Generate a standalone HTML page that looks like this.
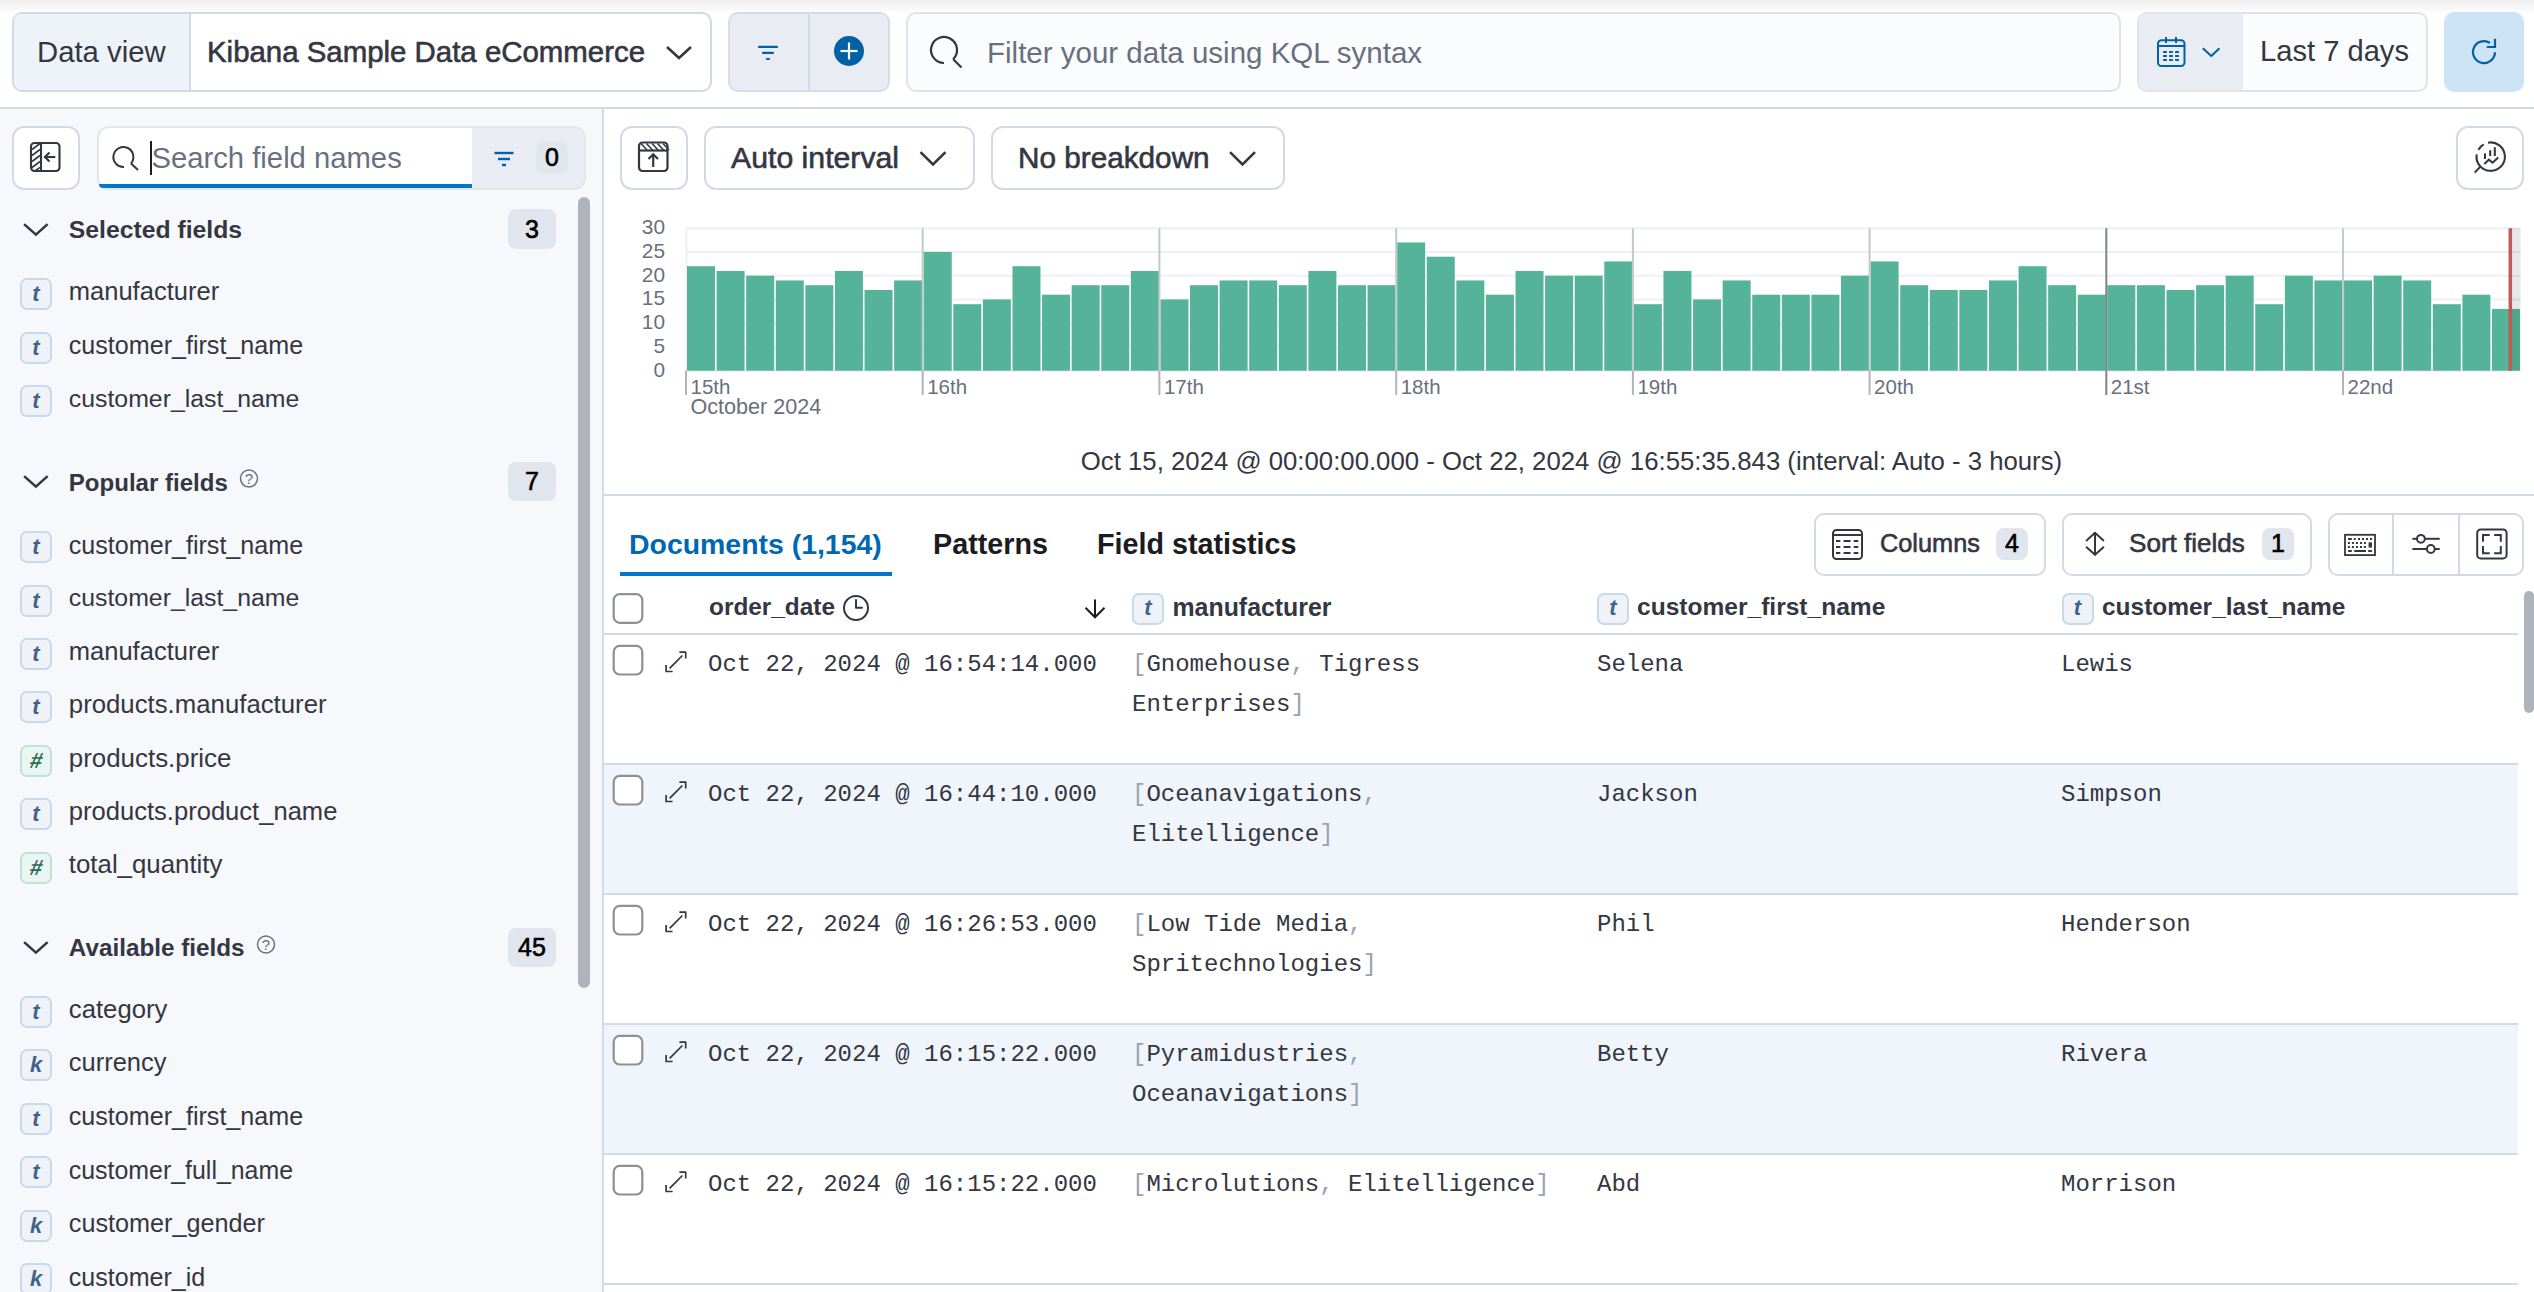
<!DOCTYPE html>
<html><head><meta charset="utf-8"><title>Discover</title><style>*{margin:0;padding:0;box-sizing:border-box}
html,body{width:2534px;height:1292px;overflow:hidden}
body{position:relative;background:#fff;font-family:"Liberation Sans",sans-serif;color:#343741}
.a{position:absolute}
.t{position:absolute;white-space:pre;line-height:1}
svg{position:absolute;left:0;top:0}
</style></head>
<body>
<div class="a" style="left:0px;top:0px;width:2534px;height:14px;background:linear-gradient(to bottom, rgba(0,0,0,0.07), rgba(0,0,0,0));z-index:1"></div>
<div class="a" style="left:0px;top:107px;width:2534px;height:2px;background:#d3dae6;"></div>
<div class="a" style="left:12px;top:12px;width:700px;height:80px;background:#fff;border:2px solid #d3dae6;border-radius:10px;"></div>
<div class="a" style="left:14px;top:14px;width:175px;height:76px;background:#eef2f9;border-radius:8px 0 0 8px;"></div>
<div class="a" style="left:189px;top:14px;width:2px;height:76px;background:#d3dae6;"></div>
<div class="t" style="left:37.0px;top:36.9px;font-size:29.29px;color:#343741;font-weight:400;font-family:'Liberation Sans', sans-serif;">Data view</div>
<div class="t" style="left:207.0px;top:36.8px;font-size:29.42px;color:#343741;font-weight:400;font-family:'Liberation Sans', sans-serif;-webkit-text-stroke-width:0.6px;">Kibana Sample Data eCommerce</div>
<div class="a" style="left:728px;top:12px;width:162px;height:80px;background:#e9edf3;border:2px solid #d6dcea;border-radius:10px;"></div>
<div class="a" style="left:808px;top:14px;width:2px;height:76px;background:#d3dae6;"></div>
<div class="a" style="left:906px;top:12px;width:1215px;height:80px;background:#fbfcfd;border:2px solid #e0e3e9;border-radius:10px;"></div>
<div class="t" style="left:987.0px;top:37.7px;font-size:29.5px;color:#69707d;font-weight:400;font-family:'Liberation Sans', sans-serif;">Filter your data using KQL syntax</div>
<div class="a" style="left:2137px;top:12px;width:291px;height:80px;background:#fbfcfd;border:2px solid #e0e3e9;border-radius:10px;"></div>
<div class="a" style="left:2139px;top:14px;width:104px;height:76px;background:#e9edf3;border-radius:8px 0 0 8px;"></div>
<div class="t" style="left:2260.0px;top:37.0px;font-size:29.13px;color:#343741;font-weight:400;font-family:'Liberation Sans', sans-serif;">Last 7 days</div>
<div class="a" style="left:2444px;top:12px;width:80px;height:80px;background:#cce4f5;border-radius:10px;"></div>
<div class="a" style="left:0px;top:109px;width:602px;height:1183px;background:#f7f8fc;"></div>
<div class="a" style="left:602px;top:109px;width:2px;height:1183px;background:#d3dae6;"></div>
<div class="a" style="left:12px;top:126px;width:68px;height:64px;background:#fff;border:2px solid #d3dae6;border-radius:12px;"></div>
<div class="a" style="left:97px;top:126px;width:489px;height:64px;background:#e9edf3;border:2px solid #e3e6eb;border-radius:12px;"></div>
<div class="a" style="left:99px;top:128px;width:373px;height:60px;background:#fff;border-radius:10px 0 0 10px;"></div>
<div class="a" style="left:99px;top:184px;width:373px;height:4px;background:#0077cc;border-radius:0 0 0 10px;"></div>
<div class="a" style="left:150px;top:141px;width:2px;height:34px;background:#1a1c21;"></div>
<div class="t" style="left:151.5px;top:144.0px;font-size:29.24px;color:#69707d;font-weight:400;font-family:'Liberation Sans', sans-serif;">Search field names</div>
<div class="a" style="left:536px;top:142px;width:32px;height:31px;background:#e0e5ee;border-radius:8px;"></div>
<div class="t" style="left:-448.0px;width:2000px;text-align:center;top:145.3px;font-size:25px;color:#000;font-weight:400;font-family:'Liberation Sans', sans-serif;-webkit-text-stroke-width:0.6px;">0</div>
<div class="a" style="left:578px;top:197px;width:12px;height:791px;background:#afb3bc;border-radius:6px;"></div>
<div class="t" style="left:68.8px;top:217.8px;font-size:24.75px;color:#343741;font-weight:700;font-family:'Liberation Sans', sans-serif;">Selected fields</div>
<div class="a" style="left:508px;top:209.4px;width:48px;height:39.5px;background:#e0e5ee;border-radius:8px;"></div>
<div class="t" style="left:-468.0px;width:2000px;text-align:center;top:216.6px;font-size:25px;color:#000;font-weight:400;font-family:'Liberation Sans', sans-serif;-webkit-text-stroke-width:0.6px;">3</div>
<div class="a" style="left:20px;top:278.29999999999995px;width:32px;height:32.0px;background:#eff3f8;border:2px solid #c8d9ea;border-radius:7px;"></div>
<div class="t" style="left:-964.0px;width:2000px;text-align:center;top:283.2px;font-size:22px;color:#40638c;font-weight:700;font-family:'Liberation Sans', sans-serif;font-style:italic;">t</div>
<div class="t" style="left:68.8px;top:279.3px;font-size:25.53px;color:#343741;font-weight:400;font-family:'Liberation Sans', sans-serif;">manufacturer</div>
<div class="a" style="left:20px;top:331.84999999999997px;width:32px;height:32.0px;background:#eff3f8;border:2px solid #c8d9ea;border-radius:7px;"></div>
<div class="t" style="left:-964.0px;width:2000px;text-align:center;top:336.7px;font-size:22px;color:#40638c;font-weight:700;font-family:'Liberation Sans', sans-serif;font-style:italic;">t</div>
<div class="t" style="left:68.8px;top:333.2px;font-size:25.1px;color:#343741;font-weight:400;font-family:'Liberation Sans', sans-serif;">customer_first_name</div>
<div class="a" style="left:20px;top:385.4px;width:32px;height:32.0px;background:#eff3f8;border:2px solid #c8d9ea;border-radius:7px;"></div>
<div class="t" style="left:-964.0px;width:2000px;text-align:center;top:390.3px;font-size:22px;color:#40638c;font-weight:700;font-family:'Liberation Sans', sans-serif;font-style:italic;">t</div>
<div class="t" style="left:68.8px;top:387.0px;font-size:24.84px;color:#343741;font-weight:400;font-family:'Liberation Sans', sans-serif;">customer_last_name</div>
<div class="t" style="left:68.8px;top:470.5px;font-size:24.06px;color:#343741;font-weight:700;font-family:'Liberation Sans', sans-serif;">Popular fields</div>
<div class="a" style="left:508px;top:461.5px;width:48px;height:39.5px;background:#e0e5ee;border-radius:8px;"></div>
<div class="t" style="left:-468.0px;width:2000px;text-align:center;top:468.7px;font-size:25px;color:#000;font-weight:400;font-family:'Liberation Sans', sans-serif;-webkit-text-stroke-width:0.6px;">7</div>
<div class="t" style="left:-751.0px;width:2000px;text-align:center;top:471.4px;font-size:15px;color:#69707d;font-weight:400;font-family:'Liberation Sans', sans-serif;">?</div>
<div class="a" style="left:20px;top:531.1999999999999px;width:32px;height:32.0px;background:#eff3f8;border:2px solid #c8d9ea;border-radius:7px;"></div>
<div class="t" style="left:-964.0px;width:2000px;text-align:center;top:536.1px;font-size:22px;color:#40638c;font-weight:700;font-family:'Liberation Sans', sans-serif;font-style:italic;">t</div>
<div class="t" style="left:68.8px;top:532.6px;font-size:25.1px;color:#343741;font-weight:400;font-family:'Liberation Sans', sans-serif;">customer_first_name</div>
<div class="a" style="left:20px;top:584.5999999999999px;width:32px;height:32.0px;background:#eff3f8;border:2px solid #c8d9ea;border-radius:7px;"></div>
<div class="t" style="left:-964.0px;width:2000px;text-align:center;top:589.5px;font-size:22px;color:#40638c;font-weight:700;font-family:'Liberation Sans', sans-serif;font-style:italic;">t</div>
<div class="t" style="left:68.8px;top:586.2px;font-size:24.84px;color:#343741;font-weight:400;font-family:'Liberation Sans', sans-serif;">customer_last_name</div>
<div class="a" style="left:20px;top:637.9999999999999px;width:32px;height:32.0px;background:#eff3f8;border:2px solid #c8d9ea;border-radius:7px;"></div>
<div class="t" style="left:-964.0px;width:2000px;text-align:center;top:642.9px;font-size:22px;color:#40638c;font-weight:700;font-family:'Liberation Sans', sans-serif;font-style:italic;">t</div>
<div class="t" style="left:68.8px;top:639.0px;font-size:25.53px;color:#343741;font-weight:400;font-family:'Liberation Sans', sans-serif;">manufacturer</div>
<div class="a" style="left:20px;top:691.4px;width:32px;height:32.0px;background:#eff3f8;border:2px solid #c8d9ea;border-radius:7px;"></div>
<div class="t" style="left:-964.0px;width:2000px;text-align:center;top:696.3px;font-size:22px;color:#40638c;font-weight:700;font-family:'Liberation Sans', sans-serif;font-style:italic;">t</div>
<div class="t" style="left:68.8px;top:692.2px;font-size:25.77px;color:#343741;font-weight:400;font-family:'Liberation Sans', sans-serif;">products.manufacturer</div>
<div class="a" style="left:20px;top:744.8px;width:32px;height:32.0px;background:#eaf6f1;border:2px solid #bfe2d4;border-radius:7px;"></div>
<div class="t" style="left:-964.0px;width:2000px;text-align:center;top:749.7px;font-size:22px;color:#2f6b59;font-weight:700;font-family:'Liberation Sans', sans-serif;font-style:italic;transform:skewX(-12deg);">#</div>
<div class="t" style="left:68.8px;top:745.5px;font-size:25.9px;color:#343741;font-weight:400;font-family:'Liberation Sans', sans-serif;">products.price</div>
<div class="a" style="left:20px;top:798.1999999999999px;width:32px;height:32.0px;background:#eff3f8;border:2px solid #c8d9ea;border-radius:7px;"></div>
<div class="t" style="left:-964.0px;width:2000px;text-align:center;top:803.1px;font-size:22px;color:#40638c;font-weight:700;font-family:'Liberation Sans', sans-serif;font-style:italic;">t</div>
<div class="t" style="left:68.8px;top:799.2px;font-size:25.57px;color:#343741;font-weight:400;font-family:'Liberation Sans', sans-serif;">products.product_name</div>
<div class="a" style="left:20px;top:851.5999999999999px;width:32px;height:32.0px;background:#eaf6f1;border:2px solid #bfe2d4;border-radius:7px;"></div>
<div class="t" style="left:-964.0px;width:2000px;text-align:center;top:856.5px;font-size:22px;color:#2f6b59;font-weight:700;font-family:'Liberation Sans', sans-serif;font-style:italic;transform:skewX(-12deg);">#</div>
<div class="t" style="left:68.8px;top:852.3px;font-size:25.84px;color:#343741;font-weight:400;font-family:'Liberation Sans', sans-serif;">total_quantity</div>
<div class="t" style="left:68.8px;top:936.3px;font-size:24.28px;color:#343741;font-weight:700;font-family:'Liberation Sans', sans-serif;">Available fields</div>
<div class="a" style="left:508px;top:927.5px;width:48px;height:39.5px;background:#e0e5ee;border-radius:8px;"></div>
<div class="t" style="left:-468.0px;width:2000px;text-align:center;top:934.7px;font-size:25px;color:#000;font-weight:400;font-family:'Liberation Sans', sans-serif;-webkit-text-stroke-width:0.6px;">45</div>
<div class="t" style="left:-734.0px;width:2000px;text-align:center;top:937.3px;font-size:15px;color:#69707d;font-weight:400;font-family:'Liberation Sans', sans-serif;">?</div>
<div class="a" style="left:20px;top:995.6999999999999px;width:32px;height:31.999999999999886px;background:#eff3f8;border:2px solid #c8d9ea;border-radius:7px;"></div>
<div class="t" style="left:-964.0px;width:2000px;text-align:center;top:1000.6px;font-size:22px;color:#40638c;font-weight:700;font-family:'Liberation Sans', sans-serif;font-style:italic;">t</div>
<div class="t" style="left:68.8px;top:996.5px;font-size:25.71px;color:#343741;font-weight:400;font-family:'Liberation Sans', sans-serif;">category</div>
<div class="a" style="left:20px;top:1049.2px;width:32px;height:32.0px;background:#eff3f8;border:2px solid #c8d9ea;border-radius:7px;"></div>
<div class="t" style="left:-964.0px;width:2000px;text-align:center;top:1054.1px;font-size:22px;color:#40638c;font-weight:700;font-family:'Liberation Sans', sans-serif;font-style:italic;">k</div>
<div class="t" style="left:68.8px;top:1050.2px;font-size:25.48px;color:#343741;font-weight:400;font-family:'Liberation Sans', sans-serif;">currency</div>
<div class="a" style="left:20px;top:1102.7px;width:32px;height:32.0px;background:#eff3f8;border:2px solid #c8d9ea;border-radius:7px;"></div>
<div class="t" style="left:-964.0px;width:2000px;text-align:center;top:1107.6px;font-size:22px;color:#40638c;font-weight:700;font-family:'Liberation Sans', sans-serif;font-style:italic;">t</div>
<div class="t" style="left:68.8px;top:1104.1px;font-size:25.1px;color:#343741;font-weight:400;font-family:'Liberation Sans', sans-serif;">customer_first_name</div>
<div class="a" style="left:20px;top:1156.2px;width:32px;height:32.0px;background:#eff3f8;border:2px solid #c8d9ea;border-radius:7px;"></div>
<div class="t" style="left:-964.0px;width:2000px;text-align:center;top:1161.1px;font-size:22px;color:#40638c;font-weight:700;font-family:'Liberation Sans', sans-serif;font-style:italic;">t</div>
<div class="t" style="left:68.8px;top:1157.7px;font-size:24.92px;color:#343741;font-weight:400;font-family:'Liberation Sans', sans-serif;">customer_full_name</div>
<div class="a" style="left:20px;top:1209.7px;width:32px;height:32.0px;background:#eff3f8;border:2px solid #c8d9ea;border-radius:7px;"></div>
<div class="t" style="left:-964.0px;width:2000px;text-align:center;top:1214.6px;font-size:22px;color:#40638c;font-weight:700;font-family:'Liberation Sans', sans-serif;font-style:italic;">k</div>
<div class="t" style="left:68.8px;top:1211.0px;font-size:25.21px;color:#343741;font-weight:400;font-family:'Liberation Sans', sans-serif;">customer_gender</div>
<div class="a" style="left:20px;top:1263.2px;width:32px;height:32.0px;background:#eff3f8;border:2px solid #c8d9ea;border-radius:7px;"></div>
<div class="t" style="left:-964.0px;width:2000px;text-align:center;top:1268.1px;font-size:22px;color:#40638c;font-weight:700;font-family:'Liberation Sans', sans-serif;font-style:italic;">k</div>
<div class="t" style="left:68.8px;top:1264.6px;font-size:25.06px;color:#343741;font-weight:400;font-family:'Liberation Sans', sans-serif;">customer_id</div>
<div class="a" style="left:620px;top:126px;width:68px;height:64px;background:#fff;border:2px solid #d3dae6;border-radius:12px;"></div>
<div class="a" style="left:704px;top:126px;width:271px;height:64px;background:#fff;border:2px solid #d3dae6;border-radius:12px;"></div>
<div class="t" style="left:731.0px;top:142.8px;font-size:30.24px;color:#343741;font-weight:400;font-family:'Liberation Sans', sans-serif;-webkit-text-stroke-width:0.6px;">Auto interval</div>
<div class="a" style="left:991px;top:126px;width:294px;height:64px;background:#fff;border:2px solid #d3dae6;border-radius:12px;"></div>
<div class="t" style="left:1018.0px;top:143.2px;font-size:29.73px;color:#343741;font-weight:400;font-family:'Liberation Sans', sans-serif;-webkit-text-stroke-width:0.6px;">No breakdown</div>
<div class="a" style="left:2456px;top:126px;width:68px;height:64px;background:#fff;border:2px solid #d3dae6;border-radius:12px;"></div>
<div class="t" style="right:1869.0px;top:359.7px;font-size:20.8px;color:#69707d;font-weight:400;font-family:'Liberation Sans', sans-serif;">0</div>
<div class="t" style="right:1869.0px;top:335.9px;font-size:20.8px;color:#69707d;font-weight:400;font-family:'Liberation Sans', sans-serif;">5</div>
<div class="t" style="right:1869.0px;top:312.2px;font-size:20.8px;color:#69707d;font-weight:400;font-family:'Liberation Sans', sans-serif;">10</div>
<div class="t" style="right:1869.0px;top:288.4px;font-size:20.8px;color:#69707d;font-weight:400;font-family:'Liberation Sans', sans-serif;">15</div>
<div class="t" style="right:1869.0px;top:264.7px;font-size:20.8px;color:#69707d;font-weight:400;font-family:'Liberation Sans', sans-serif;">20</div>
<div class="t" style="right:1869.0px;top:240.9px;font-size:20.8px;color:#69707d;font-weight:400;font-family:'Liberation Sans', sans-serif;">25</div>
<div class="t" style="right:1869.0px;top:217.2px;font-size:20.8px;color:#69707d;font-weight:400;font-family:'Liberation Sans', sans-serif;">30</div>
<div class="t" style="left:690.5px;top:377.2px;font-size:20.5px;color:#69707d;font-weight:400;font-family:'Liberation Sans', sans-serif;">15th</div>
<div class="t" style="left:927.2px;top:377.2px;font-size:20.5px;color:#69707d;font-weight:400;font-family:'Liberation Sans', sans-serif;">16th</div>
<div class="t" style="left:1163.9px;top:377.2px;font-size:20.5px;color:#69707d;font-weight:400;font-family:'Liberation Sans', sans-serif;">17th</div>
<div class="t" style="left:1400.7px;top:377.2px;font-size:20.5px;color:#69707d;font-weight:400;font-family:'Liberation Sans', sans-serif;">18th</div>
<div class="t" style="left:1637.4px;top:377.2px;font-size:20.5px;color:#69707d;font-weight:400;font-family:'Liberation Sans', sans-serif;">19th</div>
<div class="t" style="left:1874.1px;top:377.2px;font-size:20.5px;color:#69707d;font-weight:400;font-family:'Liberation Sans', sans-serif;">20th</div>
<div class="t" style="left:2110.8px;top:377.2px;font-size:20.5px;color:#69707d;font-weight:400;font-family:'Liberation Sans', sans-serif;">21st</div>
<div class="t" style="left:2347.5px;top:377.2px;font-size:20.5px;color:#69707d;font-weight:400;font-family:'Liberation Sans', sans-serif;">22nd</div>
<div class="t" style="left:690.5px;top:396.0px;font-size:21.6px;color:#69707d;font-weight:400;font-family:'Liberation Sans', sans-serif;">October 2024</div>
<div class="t" style="left:571.5px;width:2000px;text-align:center;top:449.2px;font-size:25.75px;color:#343741;font-weight:400;font-family:'Liberation Sans', sans-serif;">Oct 15, 2024 @ 00:00:00.000 - Oct 22, 2024 @ 16:55:35.843 (interval: Auto - 3 hours)</div>
<div class="a" style="left:604px;top:494px;width:1930px;height:2px;background:#d3dae6;"></div>
<div class="t" style="left:629.0px;top:530.4px;font-size:28.43px;color:#0067b5;font-weight:700;font-family:'Liberation Sans', sans-serif;">Documents (1,154)</div>
<div class="t" style="left:933.0px;top:530.2px;font-size:28.74px;color:#1a1c21;font-weight:700;font-family:'Liberation Sans', sans-serif;">Patterns</div>
<div class="t" style="left:1097.0px;top:530.2px;font-size:28.72px;color:#1a1c21;font-weight:700;font-family:'Liberation Sans', sans-serif;">Field statistics</div>
<div class="a" style="left:620px;top:572px;width:272px;height:4px;background:#0077cc;"></div>
<div class="a" style="left:1814px;top:513px;width:232px;height:63px;background:#fff;border:2px solid #d3dae6;border-radius:10px;"></div>
<div class="t" style="left:1880.0px;top:530.9px;font-size:25.32px;color:#343741;font-weight:400;font-family:'Liberation Sans', sans-serif;-webkit-text-stroke-width:0.6px;">Columns</div>
<div class="a" style="left:1996px;top:528px;width:32px;height:32px;background:#e0e5ee;border-radius:8px;"></div>
<div class="t" style="left:1012.0px;width:2000px;text-align:center;top:531.4px;font-size:25px;color:#000;font-weight:400;font-family:'Liberation Sans', sans-serif;-webkit-text-stroke-width:0.6px;">4</div>
<div class="a" style="left:2062px;top:513px;width:250px;height:63px;background:#fff;border:2px solid #d3dae6;border-radius:10px;"></div>
<div class="t" style="left:2129.0px;top:530.2px;font-size:26.07px;color:#343741;font-weight:400;font-family:'Liberation Sans', sans-serif;-webkit-text-stroke-width:0.6px;">Sort fields</div>
<div class="a" style="left:2262px;top:528px;width:32px;height:32px;background:#e0e5ee;border-radius:8px;"></div>
<div class="t" style="left:1278.0px;width:2000px;text-align:center;top:531.4px;font-size:25px;color:#000;font-weight:400;font-family:'Liberation Sans', sans-serif;-webkit-text-stroke-width:0.6px;">1</div>
<div class="a" style="left:2328px;top:513px;width:196px;height:63px;background:#fff;border:2px solid #d3dae6;border-radius:10px;"></div>
<div class="a" style="left:2392px;top:515px;width:2px;height:59px;background:#d3dae6;"></div>
<div class="a" style="left:2458px;top:515px;width:2px;height:59px;background:#d3dae6;"></div>
<div class="t" style="left:709.0px;top:595.2px;font-size:24.38px;color:#343741;font-weight:700;font-family:'Liberation Sans', sans-serif;">order_date</div>
<div class="a" style="left:1132px;top:592.5px;width:32px;height:32.0px;background:#eff3f8;border:2px solid #c8d9ea;border-radius:7px;"></div>
<div class="t" style="left:148.0px;width:2000px;text-align:center;top:597.4px;font-size:22px;color:#40638c;font-weight:700;font-family:'Liberation Sans', sans-serif;font-style:italic;">t</div>
<div class="t" style="left:1172.5px;top:594.7px;font-size:24.88px;color:#343741;font-weight:700;font-family:'Liberation Sans', sans-serif;">manufacturer</div>
<div class="a" style="left:1597px;top:592.5px;width:32px;height:32.0px;background:#eff3f8;border:2px solid #c8d9ea;border-radius:7px;"></div>
<div class="t" style="left:613.0px;width:2000px;text-align:center;top:597.4px;font-size:22px;color:#40638c;font-weight:700;font-family:'Liberation Sans', sans-serif;font-style:italic;">t</div>
<div class="t" style="left:1637.0px;top:595.0px;font-size:24.55px;color:#343741;font-weight:700;font-family:'Liberation Sans', sans-serif;">customer_first_name</div>
<div class="a" style="left:2061.5px;top:592.5px;width:32.0px;height:32.0px;background:#eff3f8;border:2px solid #c8d9ea;border-radius:7px;"></div>
<div class="t" style="left:1077.5px;width:2000px;text-align:center;top:597.4px;font-size:22px;color:#40638c;font-weight:700;font-family:'Liberation Sans', sans-serif;font-style:italic;">t</div>
<div class="t" style="left:2102.0px;top:595.1px;font-size:24.47px;color:#343741;font-weight:700;font-family:'Liberation Sans', sans-serif;">customer_last_name</div>
<div class="a" style="left:604px;top:633px;width:1914px;height:2px;background:#d3dae6;"></div>
<div class="a" style="left:604px;top:763px;width:1914px;height:2px;background:#d3dae6;"></div>
<div class="t" style="left:708.0px;top:652.6px;font-size:24px;color:#343741;font-weight:400;font-family:'Liberation Mono', monospace;">Oct 22, 2024 @ 16:54:14.000</div>
<div class="t" style="left:1132.0px;top:652.6px;font-size:24px;color:#343741;font-weight:400;font-family:'Liberation Mono', monospace;"><span style="color:#98a2b3">[</span><span style="color:#343741">Gnomehouse</span><span style="color:#98a2b3">,</span><span style="color:#343741"> Tigress</span></div>
<div class="t" style="left:1132.0px;top:692.6px;font-size:24px;color:#343741;font-weight:400;font-family:'Liberation Mono', monospace;"><span style="color:#343741">Enterprises</span><span style="color:#98a2b3">]</span></div>
<div class="t" style="left:1597.0px;top:652.6px;font-size:24px;color:#343741;font-weight:400;font-family:'Liberation Mono', monospace;">Selena</div>
<div class="t" style="left:2061.0px;top:652.6px;font-size:24px;color:#343741;font-weight:400;font-family:'Liberation Mono', monospace;">Lewis</div>
<div class="a" style="left:604px;top:765px;width:1914px;height:129px;background:#f0f4fb;"></div>
<div class="a" style="left:604px;top:893px;width:1914px;height:2px;background:#d3dae6;"></div>
<div class="t" style="left:708.0px;top:782.6px;font-size:24px;color:#343741;font-weight:400;font-family:'Liberation Mono', monospace;">Oct 22, 2024 @ 16:44:10.000</div>
<div class="t" style="left:1132.0px;top:782.6px;font-size:24px;color:#343741;font-weight:400;font-family:'Liberation Mono', monospace;"><span style="color:#98a2b3">[</span><span style="color:#343741">Oceanavigations</span><span style="color:#98a2b3">,</span></div>
<div class="t" style="left:1132.0px;top:822.6px;font-size:24px;color:#343741;font-weight:400;font-family:'Liberation Mono', monospace;"><span style="color:#343741">Elitelligence</span><span style="color:#98a2b3">]</span></div>
<div class="t" style="left:1597.0px;top:782.6px;font-size:24px;color:#343741;font-weight:400;font-family:'Liberation Mono', monospace;">Jackson</div>
<div class="t" style="left:2061.0px;top:782.6px;font-size:24px;color:#343741;font-weight:400;font-family:'Liberation Mono', monospace;">Simpson</div>
<div class="a" style="left:604px;top:1023px;width:1914px;height:2px;background:#d3dae6;"></div>
<div class="t" style="left:708.0px;top:912.6px;font-size:24px;color:#343741;font-weight:400;font-family:'Liberation Mono', monospace;">Oct 22, 2024 @ 16:26:53.000</div>
<div class="t" style="left:1132.0px;top:912.6px;font-size:24px;color:#343741;font-weight:400;font-family:'Liberation Mono', monospace;"><span style="color:#98a2b3">[</span><span style="color:#343741">Low Tide Media</span><span style="color:#98a2b3">,</span></div>
<div class="t" style="left:1132.0px;top:952.6px;font-size:24px;color:#343741;font-weight:400;font-family:'Liberation Mono', monospace;"><span style="color:#343741">Spritechnologies</span><span style="color:#98a2b3">]</span></div>
<div class="t" style="left:1597.0px;top:912.6px;font-size:24px;color:#343741;font-weight:400;font-family:'Liberation Mono', monospace;">Phil</div>
<div class="t" style="left:2061.0px;top:912.6px;font-size:24px;color:#343741;font-weight:400;font-family:'Liberation Mono', monospace;">Henderson</div>
<div class="a" style="left:604px;top:1025px;width:1914px;height:129px;background:#f0f4fb;"></div>
<div class="a" style="left:604px;top:1153px;width:1914px;height:2px;background:#d3dae6;"></div>
<div class="t" style="left:708.0px;top:1042.6px;font-size:24px;color:#343741;font-weight:400;font-family:'Liberation Mono', monospace;">Oct 22, 2024 @ 16:15:22.000</div>
<div class="t" style="left:1132.0px;top:1042.6px;font-size:24px;color:#343741;font-weight:400;font-family:'Liberation Mono', monospace;"><span style="color:#98a2b3">[</span><span style="color:#343741">Pyramidustries</span><span style="color:#98a2b3">,</span></div>
<div class="t" style="left:1132.0px;top:1082.6px;font-size:24px;color:#343741;font-weight:400;font-family:'Liberation Mono', monospace;"><span style="color:#343741">Oceanavigations</span><span style="color:#98a2b3">]</span></div>
<div class="t" style="left:1597.0px;top:1042.6px;font-size:24px;color:#343741;font-weight:400;font-family:'Liberation Mono', monospace;">Betty</div>
<div class="t" style="left:2061.0px;top:1042.6px;font-size:24px;color:#343741;font-weight:400;font-family:'Liberation Mono', monospace;">Rivera</div>
<div class="a" style="left:604px;top:1283px;width:1914px;height:2px;background:#d3dae6;"></div>
<div class="t" style="left:708.0px;top:1172.6px;font-size:24px;color:#343741;font-weight:400;font-family:'Liberation Mono', monospace;">Oct 22, 2024 @ 16:15:22.000</div>
<div class="t" style="left:1132.0px;top:1172.6px;font-size:24px;color:#343741;font-weight:400;font-family:'Liberation Mono', monospace;"><span style="color:#98a2b3">[</span><span style="color:#343741">Microlutions</span><span style="color:#98a2b3">,</span><span style="color:#343741"> Elitelligence</span><span style="color:#98a2b3">]</span></div>
<div class="t" style="left:1597.0px;top:1172.6px;font-size:24px;color:#343741;font-weight:400;font-family:'Liberation Mono', monospace;">Abd</div>
<div class="t" style="left:2061.0px;top:1172.6px;font-size:24px;color:#343741;font-weight:400;font-family:'Liberation Mono', monospace;">Morrison</div>
<div class="a" style="left:2524px;top:591px;width:10px;height:122px;background:#afb3bc;border-radius:5px;"></div>
<svg width="2534" height="1292" viewBox="0 0 2534 1292">
<polyline points="667,47 679,58 691,47" fill="none" stroke="#343741" stroke-width="2.6"/>
<g stroke="#0061a6" stroke-width="2.1" stroke-linecap="round"><line x1="759" y1="46.9" x2="777" y2="46.9"/><line x1="763" y1="52.9" x2="773" y2="52.9"/><line x1="767" y1="59" x2="769" y2="59"/></g>
<circle cx="849" cy="51" r="15" fill="#0061a6"/><g stroke="#fff" stroke-width="2.2"><line x1="840.5" y1="51" x2="857.5" y2="51"/><line x1="849" y1="42.5" x2="849" y2="59.5"/></g>
<g fill="none" stroke="#343741" stroke-width="2.2"><path d="M953.2 59.2 A13 13 0 1 0 944 63"/><line x1="953.2" y1="59.2" x2="961.5" y2="67.5"/></g>
<g fill="none" stroke="#0061a6" stroke-width="2"><rect x="2158" y="40.2" width="26.5" height="25.8" rx="3.5"/><line x1="2158" y1="46" x2="2184.5" y2="46"/><line x1="2166" y1="37" x2="2166" y2="43"/><line x1="2176" y1="37" x2="2176" y2="43"/></g>
<rect x="2163.1" y="51" width="3.8" height="2" fill="#0061a6"/>
<rect x="2169.1" y="51" width="3.8" height="2" fill="#0061a6"/>
<rect x="2175.1" y="51" width="3.8" height="2" fill="#0061a6"/>
<rect x="2163.1" y="55" width="3.8" height="2" fill="#0061a6"/>
<rect x="2169.1" y="55" width="3.8" height="2" fill="#0061a6"/>
<rect x="2175.1" y="55" width="3.8" height="2" fill="#0061a6"/>
<rect x="2163.1" y="59" width="3.8" height="2" fill="#0061a6"/>
<rect x="2169.1" y="59" width="3.8" height="2" fill="#0061a6"/>
<rect x="2175.1" y="59" width="3.8" height="2" fill="#0061a6"/>
<polyline points="2202.8,48.2 2211.3,56 2219.5,48.2" fill="none" stroke="#0061a6" stroke-width="2" stroke-linejoin="round"/>
<g fill="none" stroke="#0061a6" stroke-width="2.2"><path d="M2490 42.9 A11 11 0 1 0 2495 52.3"/><polyline points="2495,38.7 2495,47 2486.8,47"/></g>
<g fill="none" stroke="#343741" stroke-width="2.1"><rect x="31" y="143" width="28.5" height="28" rx="3.5"/><line x1="41" y1="143" x2="41" y2="171"/><polyline points="49.5,152.5 44.9,157 49.5,161.5"/><line x1="44.9" y1="157" x2="55.3" y2="157"/></g>
<g stroke="#343741" stroke-width="1.6"><line x1="32" y1="149.5" x2="40" y2="143.5"/><line x1="32" y1="155.5" x2="40" y2="149.5"/><line x1="32" y1="161.5" x2="40" y2="155.5"/><line x1="32" y1="167.5" x2="40" y2="161.5"/><line x1="35" y1="171" x2="40" y2="167.3"/></g>
<g fill="none" stroke="#343741" stroke-width="2"><path d="M131 163.5 A10 10 0 1 0 124 167"/><line x1="131" y1="163.5" x2="138" y2="170"/></g>
<g stroke="#0061a6" stroke-width="2.4"><line x1="494.5" y1="153" x2="513.5" y2="153"/><line x1="498" y1="159" x2="510" y2="159"/><line x1="502" y1="165" x2="506" y2="165"/></g>
<polyline points="24.1,224.1 35.9,234.6 47.6,224.1" fill="none" stroke="#343741" stroke-width="2.6"/>
<polyline points="24.1,476.1 35.9,486.6 47.6,476.1" fill="none" stroke="#343741" stroke-width="2.6"/>
<circle cx="249" cy="478.6" r="8.5" fill="none" stroke="#69707d" stroke-width="1.5"/>
<polyline points="24.1,942.1 35.9,952.6 47.6,942.1" fill="none" stroke="#343741" stroke-width="2.6"/>
<circle cx="266" cy="944.5" r="8.5" fill="none" stroke="#69707d" stroke-width="1.5"/>
<g fill="none" stroke="#343741" stroke-width="2.2"><rect x="639" y="142.5" width="28.5" height="28.5" rx="3.5"/><line x1="639" y1="150.5" x2="667.5" y2="150.5"/><line x1="653.2" y1="167" x2="653.2" y2="154.5"/><polyline points="648.5,159 653.2,154.3 658,159"/></g>
<g stroke="#343741" stroke-width="1.6"><line x1="641.0" y1="143.5" x2="647.0" y2="150"/><line x1="646.5" y1="143.5" x2="652.5" y2="150"/><line x1="652.0" y1="143.5" x2="658.0" y2="150"/><line x1="657.5" y1="143.5" x2="663.5" y2="150"/><line x1="663.0" y1="143.5" x2="669.0" y2="150"/></g>
<polyline points="920.5,152.1 933.0,164.5 945.5,152.1" fill="none" stroke="#343741" stroke-width="2.6"/>
<polyline points="1230.0,152.1 1242.5,164.5 1255.0,152.1" fill="none" stroke="#343741" stroke-width="2.6"/>
<g fill="none" stroke="#343741" stroke-width="2.1"><path d="M2488 142.7 A14.2 14.2 0 1 1 2476.7 154.3"/><path d="M2478.4 149.8 A14.2 14.2 0 0 1 2483.7 144.4"/><line x1="2480.6" y1="166.4" x2="2474.7" y2="172.6"/><line x1="2485" y1="153.4" x2="2485" y2="159"/><line x1="2490.2" y1="150.3" x2="2490.2" y2="156"/><line x1="2494.8" y1="147.2" x2="2494.8" y2="156"/><polyline points="2484.3,164 2488.9,159.6 2492.6,162.7 2498.2,157.5"/></g>
<line x1="686.0" y1="370.7" x2="2520.5" y2="370.7" stroke="#eceff4" stroke-width="2"/>
<line x1="686.0" y1="346.9" x2="2520.5" y2="346.9" stroke="#eceff4" stroke-width="2"/>
<line x1="686.0" y1="323.2" x2="2520.5" y2="323.2" stroke="#eceff4" stroke-width="2"/>
<line x1="686.0" y1="299.4" x2="2520.5" y2="299.4" stroke="#eceff4" stroke-width="2"/>
<line x1="686.0" y1="275.7" x2="2520.5" y2="275.7" stroke="#eceff4" stroke-width="2"/>
<line x1="686.0" y1="251.9" x2="2520.5" y2="251.9" stroke="#eceff4" stroke-width="2"/>
<line x1="686.0" y1="228.2" x2="2520.5" y2="228.2" stroke="#eceff4" stroke-width="2"/>
<line x1="686.5" y1="228.2" x2="686.5" y2="370.7" stroke="#eceff4" stroke-width="2"/>
<rect x="687.00" y="266.20" width="27.99" height="104.50" fill="#54b399"/>
<rect x="716.59" y="270.95" width="27.99" height="99.75" fill="#54b399"/>
<rect x="746.18" y="275.70" width="27.99" height="95.00" fill="#54b399"/>
<rect x="775.77" y="280.45" width="27.99" height="90.25" fill="#54b399"/>
<rect x="805.36" y="285.20" width="27.99" height="85.50" fill="#54b399"/>
<rect x="834.95" y="270.95" width="27.99" height="99.75" fill="#54b399"/>
<rect x="864.54" y="289.95" width="27.99" height="80.75" fill="#54b399"/>
<rect x="894.13" y="280.45" width="27.99" height="90.25" fill="#54b399"/>
<rect x="923.72" y="251.95" width="27.99" height="118.75" fill="#54b399"/>
<rect x="953.31" y="304.20" width="27.99" height="66.50" fill="#54b399"/>
<rect x="982.90" y="299.45" width="27.99" height="71.25" fill="#54b399"/>
<rect x="1012.49" y="266.20" width="27.99" height="104.50" fill="#54b399"/>
<rect x="1042.08" y="294.70" width="27.99" height="76.00" fill="#54b399"/>
<rect x="1071.67" y="285.20" width="27.99" height="85.50" fill="#54b399"/>
<rect x="1101.26" y="285.20" width="27.99" height="85.50" fill="#54b399"/>
<rect x="1130.85" y="270.95" width="27.99" height="99.75" fill="#54b399"/>
<rect x="1160.44" y="299.45" width="27.99" height="71.25" fill="#54b399"/>
<rect x="1190.03" y="285.20" width="27.99" height="85.50" fill="#54b399"/>
<rect x="1219.62" y="280.45" width="27.99" height="90.25" fill="#54b399"/>
<rect x="1249.21" y="280.45" width="27.99" height="90.25" fill="#54b399"/>
<rect x="1278.80" y="285.20" width="27.99" height="85.50" fill="#54b399"/>
<rect x="1308.39" y="270.95" width="27.99" height="99.75" fill="#54b399"/>
<rect x="1337.98" y="285.20" width="27.99" height="85.50" fill="#54b399"/>
<rect x="1367.57" y="285.20" width="27.99" height="85.50" fill="#54b399"/>
<rect x="1397.16" y="242.45" width="27.99" height="128.25" fill="#54b399"/>
<rect x="1426.75" y="256.70" width="27.99" height="114.00" fill="#54b399"/>
<rect x="1456.34" y="280.45" width="27.99" height="90.25" fill="#54b399"/>
<rect x="1485.93" y="294.70" width="27.99" height="76.00" fill="#54b399"/>
<rect x="1515.52" y="270.95" width="27.99" height="99.75" fill="#54b399"/>
<rect x="1545.11" y="275.70" width="27.99" height="95.00" fill="#54b399"/>
<rect x="1574.70" y="275.70" width="27.99" height="95.00" fill="#54b399"/>
<rect x="1604.29" y="261.45" width="27.99" height="109.25" fill="#54b399"/>
<rect x="1633.88" y="304.20" width="27.99" height="66.50" fill="#54b399"/>
<rect x="1663.47" y="270.95" width="27.99" height="99.75" fill="#54b399"/>
<rect x="1693.06" y="299.45" width="27.99" height="71.25" fill="#54b399"/>
<rect x="1722.65" y="280.45" width="27.99" height="90.25" fill="#54b399"/>
<rect x="1752.24" y="294.70" width="27.99" height="76.00" fill="#54b399"/>
<rect x="1781.83" y="294.70" width="27.99" height="76.00" fill="#54b399"/>
<rect x="1811.42" y="294.70" width="27.99" height="76.00" fill="#54b399"/>
<rect x="1841.01" y="275.70" width="27.99" height="95.00" fill="#54b399"/>
<rect x="1870.60" y="261.45" width="27.99" height="109.25" fill="#54b399"/>
<rect x="1900.19" y="285.20" width="27.99" height="85.50" fill="#54b399"/>
<rect x="1929.78" y="289.95" width="27.99" height="80.75" fill="#54b399"/>
<rect x="1959.37" y="289.95" width="27.99" height="80.75" fill="#54b399"/>
<rect x="1988.96" y="280.45" width="27.99" height="90.25" fill="#54b399"/>
<rect x="2018.55" y="266.20" width="27.99" height="104.50" fill="#54b399"/>
<rect x="2048.14" y="285.20" width="27.99" height="85.50" fill="#54b399"/>
<rect x="2077.73" y="294.70" width="27.99" height="76.00" fill="#54b399"/>
<rect x="2107.32" y="285.20" width="27.99" height="85.50" fill="#54b399"/>
<rect x="2136.91" y="285.20" width="27.99" height="85.50" fill="#54b399"/>
<rect x="2166.50" y="289.95" width="27.99" height="80.75" fill="#54b399"/>
<rect x="2196.09" y="285.20" width="27.99" height="85.50" fill="#54b399"/>
<rect x="2225.68" y="275.70" width="27.99" height="95.00" fill="#54b399"/>
<rect x="2255.27" y="304.20" width="27.99" height="66.50" fill="#54b399"/>
<rect x="2284.86" y="275.70" width="27.99" height="95.00" fill="#54b399"/>
<rect x="2314.45" y="280.45" width="27.99" height="90.25" fill="#54b399"/>
<rect x="2344.04" y="280.45" width="27.99" height="90.25" fill="#54b399"/>
<rect x="2373.63" y="275.70" width="27.99" height="95.00" fill="#54b399"/>
<rect x="2403.22" y="280.45" width="27.99" height="90.25" fill="#54b399"/>
<rect x="2432.81" y="304.20" width="27.99" height="66.50" fill="#54b399"/>
<rect x="2462.40" y="294.70" width="27.99" height="76.00" fill="#54b399"/>
<rect x="2491.99" y="308.95" width="27.99" height="61.75" fill="#54b399"/>
<line x1="686.0" y1="370.7" x2="686.0" y2="395" stroke="#b0b5bd" stroke-width="2"/>
<line x1="922.7" y1="228.2" x2="922.7" y2="370.7" stroke="#c3c7ce" stroke-width="2"/>
<line x1="922.7" y1="370.7" x2="922.7" y2="395" stroke="#b0b5bd" stroke-width="2"/>
<line x1="1159.4" y1="228.2" x2="1159.4" y2="370.7" stroke="#c3c7ce" stroke-width="2"/>
<line x1="1159.4" y1="370.7" x2="1159.4" y2="395" stroke="#b0b5bd" stroke-width="2"/>
<line x1="1396.2" y1="228.2" x2="1396.2" y2="370.7" stroke="#c3c7ce" stroke-width="2"/>
<line x1="1396.2" y1="370.7" x2="1396.2" y2="395" stroke="#b0b5bd" stroke-width="2"/>
<line x1="1632.9" y1="228.2" x2="1632.9" y2="370.7" stroke="#c3c7ce" stroke-width="2"/>
<line x1="1632.9" y1="370.7" x2="1632.9" y2="395" stroke="#b0b5bd" stroke-width="2"/>
<line x1="1869.6" y1="228.2" x2="1869.6" y2="370.7" stroke="#c3c7ce" stroke-width="2"/>
<line x1="1869.6" y1="370.7" x2="1869.6" y2="395" stroke="#b0b5bd" stroke-width="2"/>
<line x1="2106.3" y1="228.2" x2="2106.3" y2="370.7" stroke="#7d828b" stroke-width="2"/>
<line x1="2106.3" y1="370.7" x2="2106.3" y2="395" stroke="#7d828b" stroke-width="2"/>
<line x1="2343.0" y1="228.2" x2="2343.0" y2="370.7" stroke="#c3c7ce" stroke-width="2"/>
<line x1="2343.0" y1="370.7" x2="2343.0" y2="395" stroke="#b0b5bd" stroke-width="2"/>
<rect x="2512" y="228.2" width="8.5" height="142.5" fill="rgba(52,55,65,0.12)"/>
<line x1="2510.3" y1="228.2" x2="2510.3" y2="370.7" stroke="#c05a58" stroke-width="3.5"/>
<g fill="none" stroke="#343741" stroke-width="2"><rect x="1833" y="530" width="29" height="29" rx="3.5"/><line x1="1833" y1="535" x2="1862" y2="535"/></g>
<g stroke="#343741" stroke-width="2"><line x1="1836" y1="541" x2="1840.3" y2="541"/><line x1="1843.6" y1="541" x2="1850.6" y2="541"/><line x1="1853.7" y1="541" x2="1858.3" y2="541"/></g>
<g stroke="#343741" stroke-width="2"><line x1="1836" y1="547" x2="1840.3" y2="547"/><line x1="1843.6" y1="547" x2="1850.6" y2="547"/><line x1="1853.7" y1="547" x2="1858.3" y2="547"/></g>
<g stroke="#343741" stroke-width="2"><line x1="1836" y1="553" x2="1840.3" y2="553"/><line x1="1843.6" y1="553" x2="1850.6" y2="553"/><line x1="1853.7" y1="553" x2="1858.3" y2="553"/></g>
<g fill="none" stroke="#343741" stroke-width="2" stroke-linejoin="round" stroke-linecap="round"><line x1="2095" y1="533" x2="2095" y2="554.5"/><polyline points="2086.6,540.4 2095,532.8 2103.4,540.4"/><polyline points="2086.6,547.3 2095,554.8 2103.4,547.3"/></g>
<rect x="2345" y="534.8" width="30" height="20.3" fill="none" stroke="#343741" stroke-width="1.8"/>
<rect x="2353.7" y="538" width="2" height="2" fill="#343741"/>
<rect x="2358" y="538" width="2" height="2" fill="#343741"/>
<rect x="2362" y="538" width="2" height="2" fill="#343741"/>
<rect x="2366" y="538" width="2" height="2" fill="#343741"/>
<rect x="2370" y="538" width="2" height="2" fill="#343741"/>
<rect x="2348.1" y="538" width="3.7" height="2" fill="#343741"/>
<rect x="2347.9" y="542" width="2" height="2" fill="#343741"/>
<rect x="2351.9" y="542" width="2" height="2" fill="#343741"/>
<rect x="2355.9" y="542" width="2" height="2" fill="#343741"/>
<rect x="2360" y="542" width="2" height="2" fill="#343741"/>
<rect x="2363.9" y="542" width="2" height="2" fill="#343741"/>
<rect x="2347.9" y="546" width="2" height="2" fill="#343741"/>
<rect x="2351.9" y="546" width="2" height="2" fill="#343741"/>
<rect x="2355.9" y="546" width="2" height="2" fill="#343741"/>
<rect x="2360" y="546" width="2" height="2" fill="#343741"/>
<rect x="2363.9" y="546" width="2" height="2" fill="#343741"/>
<rect x="2368.6" y="542.3" width="3.3" height="5.3" fill="#343741"/>
<rect x="2348.1" y="550" width="3.7" height="2" fill="#343741"/><rect x="2354.3" y="550" width="11.7" height="2" fill="#343741"/><rect x="2368.2" y="550" width="3.7" height="2" fill="#343741"/>
<g fill="none" stroke="#343741" stroke-width="2"><line x1="2412.4" y1="538.8" x2="2439.7" y2="538.8"/><line x1="2412.4" y1="549" x2="2439.7" y2="549"/><circle cx="2420.9" cy="538.8" r="3.9" fill="#fff"/><circle cx="2430.8" cy="549" r="3.9" fill="#fff"/></g>
<g fill="none" stroke="#343741" stroke-width="2"><rect x="2477.2" y="529.4" width="29.4" height="29" rx="3.5"/><polyline points="2483,541.8 2483,535.1 2489.7,535.1"/><polyline points="2494.1,535.1 2500.8,535.1 2500.8,541.8"/><polyline points="2483,545.9 2483,553.2 2489.7,553.2"/><polyline points="2494.1,553.2 2500.8,553.2 2500.8,545.9"/></g>
<rect x="613.7" y="594.2" width="28.6" height="28.6" rx="6" fill="#fff" stroke="#8d9096" stroke-width="2.2"/>
<g fill="none" stroke="#343741" stroke-width="2" stroke-linejoin="round" stroke-linecap="round"><circle cx="856" cy="608" r="12"/><polyline points="856,600 856,607.8 862,607.8"/></g>
<g fill="none" stroke="#1a1c21" stroke-width="2"><line x1="1095" y1="599.5" x2="1095" y2="617.5"/><polyline points="1085.5,607.8 1095,617.3 1104.5,607.8"/></g>
<rect x="613.7" y="645.9000000000001" width="28.6" height="28.6" rx="6" fill="#fff" stroke="#8d9096" stroke-width="2.2"/>
<g fill="none" stroke="#343741" stroke-width="1.7" stroke-linejoin="round"><line x1="669.6" y1="668.4" x2="682.4" y2="655.5"/><polyline points="679.4,652.2 685.7,652.2 685.7,658.5"/><polyline points="666.1,665 666.1,671.5 672.6,671.5"/></g>
<rect x="613.7" y="775.9000000000001" width="28.6" height="28.6" rx="6" fill="#fff" stroke="#8d9096" stroke-width="2.2"/>
<g fill="none" stroke="#343741" stroke-width="1.7" stroke-linejoin="round"><line x1="669.6" y1="798.4" x2="682.4" y2="785.5"/><polyline points="679.4,782.2 685.7,782.2 685.7,788.5"/><polyline points="666.1,795 666.1,801.5 672.6,801.5"/></g>
<rect x="613.7" y="905.9000000000001" width="28.6" height="28.6" rx="6" fill="#fff" stroke="#8d9096" stroke-width="2.2"/>
<g fill="none" stroke="#343741" stroke-width="1.7" stroke-linejoin="round"><line x1="669.6" y1="928.4" x2="682.4" y2="915.5"/><polyline points="679.4,912.2 685.7,912.2 685.7,918.5"/><polyline points="666.1,925 666.1,931.5 672.6,931.5"/></g>
<rect x="613.7" y="1035.9" width="28.6" height="28.6" rx="6" fill="#fff" stroke="#8d9096" stroke-width="2.2"/>
<g fill="none" stroke="#343741" stroke-width="1.7" stroke-linejoin="round"><line x1="669.6" y1="1058.4" x2="682.4" y2="1045.5"/><polyline points="679.4,1042.2 685.7,1042.2 685.7,1048.5"/><polyline points="666.1,1055 666.1,1061.5 672.6,1061.5"/></g>
<rect x="613.7" y="1165.9" width="28.6" height="28.6" rx="6" fill="#fff" stroke="#8d9096" stroke-width="2.2"/>
<g fill="none" stroke="#343741" stroke-width="1.7" stroke-linejoin="round"><line x1="669.6" y1="1188.4" x2="682.4" y2="1175.5"/><polyline points="679.4,1172.2 685.7,1172.2 685.7,1178.5"/><polyline points="666.1,1185 666.1,1191.5 672.6,1191.5"/></g>
</svg>
</body></html>
